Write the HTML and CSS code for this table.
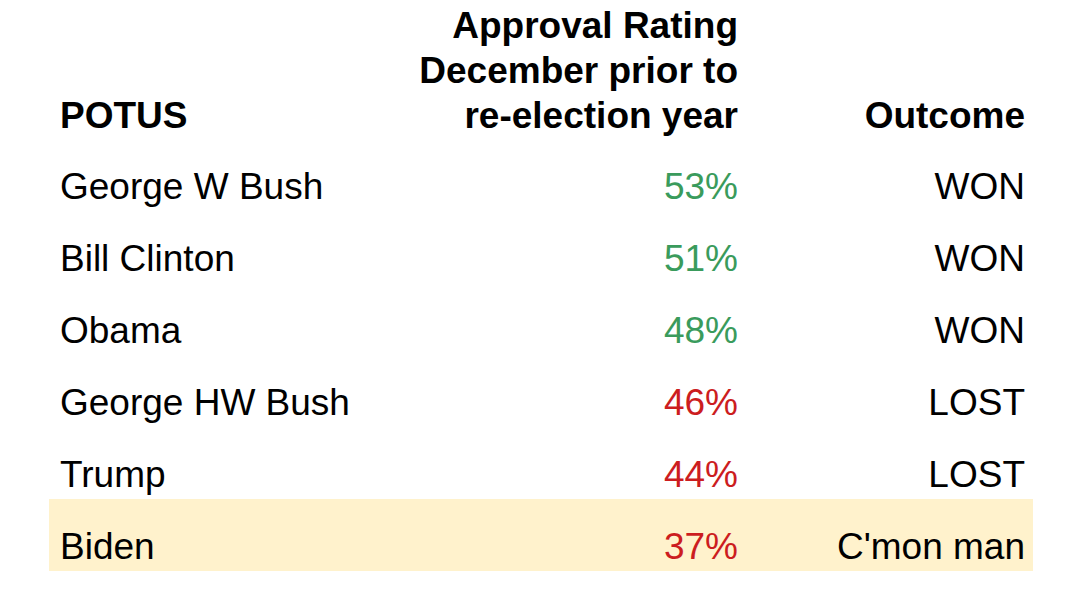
FILE: index.html
```html
<!DOCTYPE html>
<html lang="en">
<head>
<meta charset="utf-8">
<title>POTUS approval ratings</title>
<link rel="stylesheet" href="styles.css">
</head>
<body>
<div class="table">
  <div class="row head">
    <div class="c name">POTUS</div>
    <div class="c num">Approval Rating<br>December prior to<br>re-election year</div>
    <div class="c out">Outcome</div>
  </div>
  <div class="row">
    <div class="c name">George W Bush</div>
    <div class="c num green">53%</div>
    <div class="c out">WON</div>
  </div>
  <div class="row">
    <div class="c name">Bill Clinton</div>
    <div class="c num green">51%</div>
    <div class="c out">WON</div>
  </div>
  <div class="row">
    <div class="c name">Obama</div>
    <div class="c num green">48%</div>
    <div class="c out">WON</div>
  </div>
  <div class="row">
    <div class="c name">George HW Bush</div>
    <div class="c num red">46%</div>
    <div class="c out">LOST</div>
  </div>
  <div class="row">
    <div class="c name">Trump</div>
    <div class="c num red">44%</div>
    <div class="c out">LOST</div>
  </div>
  <div class="row hl">
    <div class="c name">Biden</div>
    <div class="c num red">37%</div>
    <div class="c out">C'mon man</div>
  </div>
</div>
</body>
</html>
```

FILE: styles.css
```css
html, body {
  margin: 0;
  padding: 0;
  background: #ffffff;
}
body {
  font-family: "Liberation Sans", Arial, sans-serif;
  font-size: 37px;
  color: #000000;
}
.table {
  margin-left: 49px;
  width: 984px;
}
.row {
  display: grid;
  grid-template-columns: 340px 338px 287px;
  align-items: end;
  padding: 27px 8px 3px 11px;
  height: 72px;
  box-sizing: border-box;
  line-height: 42px;
}
.row.head {
  height: 139px;
  padding-top: 3px;
  padding-bottom: 1px;
  line-height: 45px;
  font-weight: bold;
}
.c {
  white-space: nowrap;
}
.name {
  text-align: left;
}
.num, .out {
  text-align: right;
}
.green {
  color: #3a9b5c;
}
.red {
  color: #cc1d1f;
}
.hl {
  background: #fff2cc;
}
```
